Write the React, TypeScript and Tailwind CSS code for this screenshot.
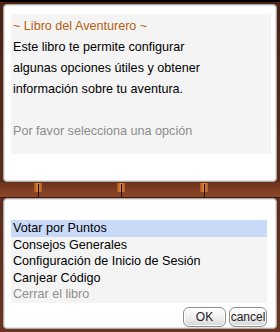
const options = [
  'Votar por Puntos',
  'Consejos Generales',
  'Configuración de Inicio de Sesión',
  'Canjear Código',
]

function Hinge() {
  return (
    <div className="relative h-full w-[8px]">
      <div className="mt-[1px] h-[9px] w-full bg-gradient-to-r from-[#a8521e] via-[#e08a40] to-[#b05a22]" />
      <div className="absolute left-[4px] top-[2px] h-[13px] w-px bg-[#1a0a04]" />
    </div>
  )
}

function Button({ label, w }: { label: string; w: string }) {
  return (
    <button
      className={`${w} h-[20px] rounded-[6px] border border-[#8e8e8e] bg-gradient-to-b from-white via-[#f1f1f1] to-[#d6d6d6] text-[12px] leading-[18px] text-[#222] shadow-[inset_0_0_0_1px_#ffffff]`}
    >
      {label}
    </button>
  )
}

export default function App() {
  return (
    <div
      className="flex h-[332px] w-[280px] flex-col border-t-[2px] border-black bg-gradient-to-b from-[#4a2314] to-[#6a3420] px-[3px] pt-[2px]"
      style={{ fontFamily: '"Liberation Sans", Arial, sans-serif' }}
    >
      {/* top message panel */}
      <div className="h-[178px] rounded-[4px] border border-[#a9a9a9] bg-white pb-[27px] pl-[7px] pr-[5px] pt-[9px] shadow-[inset_0_0_0_1px_#e4e4e4]">
        <div className="h-full bg-[#f4f4f4] px-[2px] pt-[2px] text-[12.6px] leading-[21px] text-black">
          <p className="text-[#b4600e]">~ Libro del Aventurero ~</p>
          <p>Este libro te permite configurar</p>
          <p>algunas opciones útiles y obtener</p>
          <p>información sobre tu aventura.</p>
          <p>&nbsp;</p>
          <p className="text-[#8c8c8c]">Por favor selecciona una opción</p>
        </div>
      </div>

      {/* wooden divider */}
      <div className="-mx-[3px] flex h-[16px] items-stretch border-b border-[#3e1a0c] bg-gradient-to-b from-[#6a301c] via-[#7e3e24] to-[#8b4628]">
        <div className="w-[34px]" />
        <Hinge />
        <div className="w-[75px]" />
        <Hinge />
        <div className="w-[75px]" />
        <Hinge />
      </div>

      {/* bottom menu panel */}
      <div className="flex h-[131px] flex-col rounded-[4px] border border-[#a9a9a9] bg-white pl-[7px] pr-[9px] pt-[21px] shadow-[inset_0_0_0_1px_#e4e4e4]">
        <ul className="bg-[#f4f4f4] text-[12.6px] leading-[16.5px] text-black">
          {options.map((o, i) => (
            <li key={o} className={i === 0 ? 'bg-[#c8daf8] pl-[2px]' : 'pl-[2px]'}>
              {o}
            </li>
          ))}
          <li className="pl-[2px] text-[#8f8f8f]">Cerrar el libro</li>
        </ul>
        <div className="mt-[4px] flex justify-end gap-[3px]">
          <Button label="OK" w="w-[43px]" />
          <Button label="cancel" w="w-[38px]" />
        </div>
      </div>
    </div>
  )
}
